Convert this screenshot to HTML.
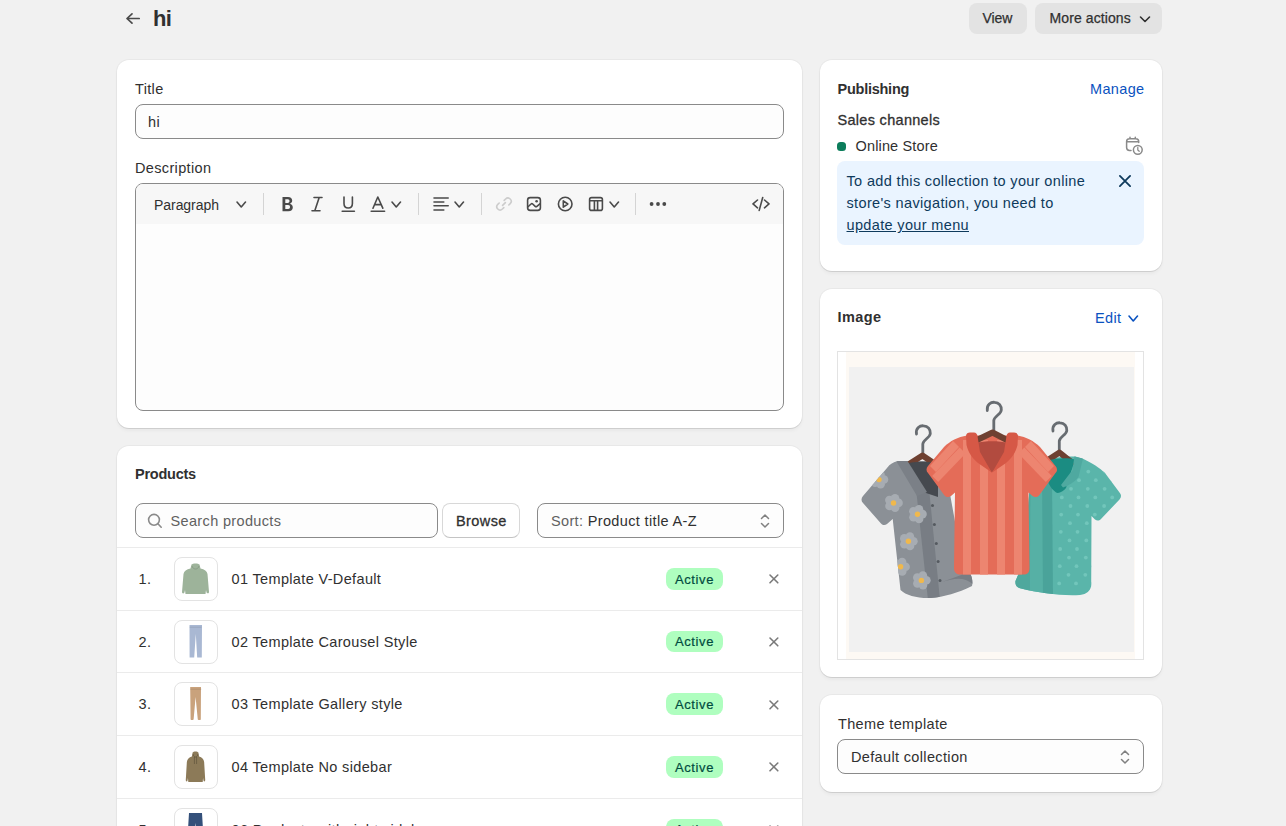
<!DOCTYPE html>
<html><head><meta charset="utf-8"><style>
html,body{margin:0;padding:0;}
body{width:1286px;height:826px;overflow:hidden;position:relative;background:#f1f1f1;font-family:'Liberation Sans', sans-serif;}
.t{position:absolute;white-space:nowrap;line-height:20px;}
.b{position:absolute;}
</style></head><body>
<svg class="b" style="left:124px;top:11px" width="18" height="15" viewBox="0 0 18 15"><path d="M8 2.8 L3 7.5 L8 12.2 M3 7.5 H15.2" fill="none" stroke="#4a4a4a" stroke-width="1.7" stroke-linecap="round" stroke-linejoin="round"/></svg>
<div class="t" style="left:153px;top:9.38px;font-size:22px;font-weight:700;color:#303030;letter-spacing:-0.7px;">hi</div>
<div class="b" style="left:969px;top:3px;width:58px;height:31px;background:#e3e3e3;border-radius:8px;"></div>
<div class="t" style="left:982.5px;top:7.65px;font-size:14px;font-weight:400;color:#303030;letter-spacing:-0.1px;-webkit-text-stroke:0.25px #303030;">View</div>
<div class="b" style="left:1035px;top:3px;width:127px;height:31px;background:#e3e3e3;border-radius:8px;"></div>
<div class="t" style="left:1049.5px;top:7.65px;font-size:14px;font-weight:400;color:#303030;letter-spacing:0.1px;-webkit-text-stroke:0.25px #303030;">More actions</div>
<svg class="b" style="left:1139px;top:15px" width="12" height="9" viewBox="0 0 12 9"><path d="M1.5 2 L6 6.5 L10.5 2" fill="none" stroke="#303030" stroke-width="1.6" stroke-linecap="round" stroke-linejoin="round"/></svg>
<div class="b" style="left:117px;top:60px;width:685px;height:368px;background:#fff;border-radius:12px;box-shadow:0 1px 0 0 rgba(26,26,26,.08), 0 0 0 1px rgba(0,0,0,.035), 0 3px 4px -1px rgba(26,26,26,.06);"></div>
<div class="t" style="left:135px;top:78.98px;font-size:14.5px;font-weight:400;color:#303030;letter-spacing:0.35px;">Title</div>
<div class="b" style="left:135px;top:104px;width:649px;height:35px;background:#fdfdfd;border:1px solid #8a8a8a;border-radius:8px;box-sizing:border-box;"></div>
<div class="t" style="left:148px;top:111.98px;font-size:14.5px;font-weight:400;color:#303030;letter-spacing:0.35px;">hi</div>
<div class="t" style="left:135px;top:157.98px;font-size:14.5px;font-weight:400;color:#303030;letter-spacing:0.35px;">Description</div>
<div class="b" style="left:135px;top:183px;width:649px;height:228px;background:#fdfdfd;border:1px solid #8a8a8a;border-radius:8px;box-sizing:border-box;"></div>
<div class="b" style="left:136px;top:184px;width:647px;height:40px;background:#f7f7f7;border-radius:7px 7px 0 0;"></div>
<div class="t" style="left:154px;top:194.65px;font-size:14px;font-weight:400;color:#303030;letter-spacing:-0.05px;">Paragraph</div>
<svg class="b" style="left:234.5px;top:200px" width="12.5" height="9" viewBox="0 0 12.5 9"><path d="M2 2 L6.25 7 L10.5 2" fill="none" stroke="#4a4a4a" stroke-width="1.6" stroke-linecap="round" stroke-linejoin="round"/></svg>
<div class="b" style="left:263px;top:193px;width:1px;height:22px;background:#d4d4d4;"></div>
<svg class="b" style="left:279px;top:194px" width="16" height="20" viewBox="0 0 16 20"><path d="M3.5 3 H9 C11.8 3 13.2 4.6 13.2 6.6 C13.2 8.3 12.2 9.4 10.8 9.8 C12.6 10.2 13.8 11.5 13.8 13.4 C13.8 15.6 12.2 17.2 9.4 17.2 H3.5 Z M6.3 5.3 V8.9 H8.8 C10 8.9 10.5 8.2 10.5 7.1 C10.5 6 10 5.3 8.8 5.3 Z M6.3 11.1 V14.9 H9.1 C10.4 14.9 11 14.2 11 13 C11 11.8 10.4 11.1 9.1 11.1 Z" fill="#4a4a4a" fill-rule="evenodd"/></svg>
<svg class="b" style="left:309px;top:194px" width="16" height="20" viewBox="0 0 16 20"><path d="M5 3.5 H13 M3 16.8 H11 M10.2 3.5 L5.8 16.8" fill="none" stroke="#4a4a4a" stroke-width="1.6" stroke-linecap="round" stroke-linejoin="round"/></svg>
<svg class="b" style="left:339px;top:194px" width="18" height="20" viewBox="0 0 18 20"><path d="M5 3 V9.5 C5 12.6 6.6 14 9.2 14 C11.8 14 13.4 12.6 13.4 9.5 V3" fill="none" stroke="#4a4a4a" stroke-width="1.6" stroke-linecap="round" stroke-linejoin="round"/><path d="M3.2 17.2 H15.4" fill="none" stroke="#4a4a4a" stroke-width="1.6" stroke-linecap="round" stroke-linejoin="round"/></svg>
<svg class="b" style="left:368px;top:194px" width="20" height="20" viewBox="0 0 20 20"><path d="M5 14.2 L9.8 3 L14.8 14.2 M6.6 10.6 H13.2" fill="none" stroke="#4a4a4a" stroke-width="1.6" stroke-linecap="round" stroke-linejoin="round"/><path d="M3.2 17.2 H16.6" fill="none" stroke="#4a4a4a" stroke-width="1.6" stroke-linecap="round" stroke-linejoin="round"/></svg>
<svg class="b" style="left:390px;top:200px" width="12.5" height="9" viewBox="0 0 12.5 9"><path d="M2 2 L6.25 7 L10.5 2" fill="none" stroke="#4a4a4a" stroke-width="1.6" stroke-linecap="round" stroke-linejoin="round"/></svg>
<div class="b" style="left:418px;top:193px;width:1px;height:22px;background:#d4d4d4;"></div>
<svg class="b" style="left:431px;top:194px" width="20" height="20" viewBox="0 0 20 20"><path d="M3 4 H17.2 M3 8 H12.8 M3 11.8 H17.2 M3 16 H12.8" fill="none" stroke="#4a4a4a" stroke-width="1.6" stroke-linecap="round" stroke-linejoin="round"/></svg>
<svg class="b" style="left:452.5px;top:200px" width="12.5" height="9" viewBox="0 0 12.5 9"><path d="M2 2 L6.25 7 L10.5 2" fill="none" stroke="#4a4a4a" stroke-width="1.6" stroke-linecap="round" stroke-linejoin="round"/></svg>
<div class="b" style="left:481px;top:193px;width:1px;height:22px;background:#d4d4d4;"></div>
<svg class="b" style="left:494px;top:194px" width="20" height="20" viewBox="0 0 20 20"><path d="M8.6 11.4 L11.4 8.6 M10.2 6.4 L11.6 5 C12.9 3.7 14.9 3.7 16.2 5 C17.5 6.3 17.5 8.3 16.2 9.6 L14.8 11 M9.8 13.6 L8.4 15 C7.1 16.3 5.1 16.3 3.8 15 C2.5 13.7 2.5 11.7 3.8 10.4 L5.2 9" fill="none" stroke="#cccccc" stroke-width="1.6" stroke-linecap="round"/></svg>
<svg class="b" style="left:525px;top:195px" width="18" height="18" viewBox="0 0 18 18"><rect x="2.6" y="2.6" width="12.8" height="12.8" rx="2.6" fill="none" stroke="#4a4a4a" stroke-width="1.6" stroke-linecap="round" stroke-linejoin="round"/><circle cx="11.6" cy="6.2" r="1.3" fill="#4a4a4a"/><path d="M2.8 12 L6 9 C6.5 8.5 7.2 8.5 7.7 9 L10.2 11.4 C10.7 11.9 11.4 11.9 11.9 11.4 L15.2 8.6" fill="none" stroke="#4a4a4a" stroke-width="1.6" stroke-linecap="round" stroke-linejoin="round"/></svg>
<svg class="b" style="left:556px;top:195px" width="18" height="18" viewBox="0 0 18 18"><circle cx="9.2" cy="9" r="6.8" fill="none" stroke="#4a4a4a" stroke-width="1.6" stroke-linecap="round" stroke-linejoin="round"/><path d="M7.3 5.8 L11.8 9 L7.3 12.2 Z" fill="none" stroke="#4a4a4a" stroke-width="1.6" stroke-linecap="round" stroke-linejoin="round"/></svg>
<svg class="b" style="left:587px;top:195px" width="18" height="18" viewBox="0 0 18 18"><rect x="2.6" y="2.6" width="12.8" height="12.8" rx="2" fill="none" stroke="#4a4a4a" stroke-width="1.6" stroke-linecap="round" stroke-linejoin="round"/><path d="M2.8 5.8 H15.2 M7.4 5.8 V15.2 M10.6 5.8 V15.2" fill="none" stroke="#4a4a4a" stroke-width="1.6" stroke-linecap="round" stroke-linejoin="round"/></svg>
<svg class="b" style="left:608px;top:200px" width="12.5" height="9" viewBox="0 0 12.5 9"><path d="M2 2 L6.25 7 L10.5 2" fill="none" stroke="#4a4a4a" stroke-width="1.6" stroke-linecap="round" stroke-linejoin="round"/></svg>
<div class="b" style="left:635px;top:193px;width:1px;height:22px;background:#d4d4d4;"></div>
<svg class="b" style="left:648px;top:200px" width="20" height="8" viewBox="0 0 20 8"><circle cx="3.6" cy="4" r="1.9" fill="#4a4a4a"/><circle cx="10" cy="4" r="1.9" fill="#4a4a4a"/><circle cx="16.3" cy="4" r="1.9" fill="#4a4a4a"/></svg>
<svg class="b" style="left:750px;top:195px" width="22" height="18" viewBox="0 0 22 18"><path d="M7.5 5 L3 8.9 L7.5 12.8 M14.5 5 L19 8.9 L14.5 12.8 M12.7 2.5 L9.2 15.4" fill="none" stroke="#4a4a4a" stroke-width="1.6" stroke-linecap="round" stroke-linejoin="round"/></svg>
<div class="b" style="left:117px;top:446px;width:685px;height:454px;background:#fff;border-radius:12px;box-shadow:0 1px 0 0 rgba(26,26,26,.08), 0 0 0 1px rgba(0,0,0,.035), 0 3px 4px -1px rgba(26,26,26,.06);"></div>
<div class="t" style="left:135px;top:464.48px;font-size:14.5px;font-weight:700;color:#303030;letter-spacing:-0.25px;">Products</div>
<div class="b" style="left:135px;top:503px;width:303px;height:35px;background:#fdfdfd;border:1px solid #8a8a8a;border-radius:8px;box-sizing:border-box;"></div>
<svg class="b" style="left:146px;top:512px" width="18" height="18" viewBox="0 0 18 18"><circle cx="8" cy="7.8" r="5.4" fill="none" stroke="#8a8a8a" stroke-width="1.6"/><path d="M11.9 11.8 L15.2 15.2" fill="none" stroke="#8a8a8a" stroke-width="1.6" stroke-linecap="round"/></svg>
<div class="t" style="left:170.5px;top:510.98px;font-size:14.5px;font-weight:400;color:#616161;letter-spacing:0.35px;">Search products</div>
<div class="b" style="left:442px;top:503px;width:78px;height:35px;background:#fff;border:1px solid #d8d8d8;border-bottom-color:#c4c4c4;border-radius:8px;box-sizing:border-box;"></div>
<div class="t" style="left:456px;top:510.98px;font-size:14.5px;font-weight:400;color:#303030;letter-spacing:0.4px;-webkit-text-stroke:0.3px #303030;">Browse</div>
<div class="b" style="left:537px;top:503px;width:247px;height:35px;background:#fdfdfd;border:1px solid #8a8a8a;border-radius:8px;box-sizing:border-box;"></div>
<div class="t" style="left:551px;top:510.98px;font-size:14.5px;font-weight:400;color:#303030;letter-spacing:0.35px;"><span style="color:#616161">Sort:</span> Product title A-Z</div>
<svg class="b" style="left:758px;top:511.5px" width="14" height="18" viewBox="0 0 14 18"><path d="M3.5 6.5 L7 3 L10.5 6.5 M3.5 11.5 L7 15 L10.5 11.5" fill="none" stroke="#808080" stroke-width="1.5" stroke-linecap="round" stroke-linejoin="round"/></svg>
<div class="b" style="left:117px;top:547px;width:685px;height:1px;background:#ebebeb;"></div>
<div class="t" style="left:138.5px;top:568.98px;font-size:14.5px;font-weight:400;color:#303030;letter-spacing:0.35px;">1.</div>
<div class="b" style="left:174px;top:557px;width:44px;height:44px;background:#fff;border:1px solid #e3e3e3;border-radius:8px;box-sizing:border-box;"></div>
<svg class="b" style="left:174px;top:557px" width="43" height="43" viewBox="0 0 43 43"><path d="M17.5 7.5 C18.5 6 24.5 6 25.5 7.5 L26.5 11.5 C30.5 12.5 33 14 33.5 17 L35 35 C35 36.8 33 36.8 32.5 35.2 L32 33 L31.5 37 L11.5 37 L11 33 L10.5 35.2 C10 36.8 8 36.8 8 35 L9.5 17 C10 14 12.5 12.5 16.5 11.5 Z" fill="#9db39a"/><path d="M18 9 C19 13 24 13 25 9" fill="none" stroke="rgba(0,0,0,.12)" stroke-width="1"/></svg>
<div class="t" style="left:231.5px;top:568.98px;font-size:14.5px;font-weight:400;color:#303030;letter-spacing:0.35px;">01 Template V-Default</div>
<div class="b" style="left:666px;top:568px;width:57px;height:22px;background:#affebf;border-radius:8px;"></div>
<div class="t" style="left:675px;top:569.50px;font-size:13px;font-weight:400;color:#014b40;letter-spacing:0.6px;-webkit-text-stroke:0.2px #014b40;">Active</div>
<svg class="b" style="left:766px;top:571px" width="16" height="16" viewBox="0 0 16 16"><path d="M4 4 L11.8 11.8 M11.8 4 L4 11.8" fill="none" stroke="#7a7a7a" stroke-width="1.6" stroke-linecap="round"/></svg>
<div class="b" style="left:117px;top:610px;width:685px;height:1px;background:#ebebeb;"></div>
<div class="t" style="left:138.5px;top:631.98px;font-size:14.5px;font-weight:400;color:#303030;letter-spacing:0.35px;">2.</div>
<div class="b" style="left:174px;top:620px;width:44px;height:44px;background:#fff;border:1px solid #e3e3e3;border-radius:8px;box-sizing:border-box;"></div>
<svg class="b" style="left:174px;top:620px" width="43" height="43" viewBox="0 0 43 43"><path d="M15.5 5 H28 L27.8 37.5 H23.2 L21.8 14 L20.2 37.5 H15.6 Z" fill="#a9b8d3"/><path d="M15.5 7.2 H27.5" stroke="rgba(0,0,0,.1)" stroke-width="1"/></svg>
<div class="t" style="left:231.5px;top:631.98px;font-size:14.5px;font-weight:400;color:#303030;letter-spacing:0.35px;">02 Template Carousel Style</div>
<div class="b" style="left:666px;top:631px;width:57px;height:21px;background:#affebf;border-radius:8px;"></div>
<div class="t" style="left:675px;top:631.50px;font-size:13px;font-weight:400;color:#014b40;letter-spacing:0.6px;-webkit-text-stroke:0.2px #014b40;">Active</div>
<svg class="b" style="left:766px;top:634px" width="16" height="16" viewBox="0 0 16 16"><path d="M4 4 L11.8 11.8 M11.8 4 L4 11.8" fill="none" stroke="#7a7a7a" stroke-width="1.6" stroke-linecap="round"/></svg>
<div class="b" style="left:117px;top:672px;width:685px;height:1px;background:#ebebeb;"></div>
<div class="t" style="left:138.5px;top:693.98px;font-size:14.5px;font-weight:400;color:#303030;letter-spacing:0.35px;">3.</div>
<div class="b" style="left:174px;top:682px;width:44px;height:44px;background:#fff;border:1px solid #e3e3e3;border-radius:8px;box-sizing:border-box;"></div>
<svg class="b" style="left:174px;top:682px" width="43" height="43" viewBox="0 0 43 43"><path d="M16.2 5 H27 L26.8 37.5 C26.3 38.2 24.6 38.2 23.8 37.5 L21.6 15 L19.6 37.5 C18.8 38.2 17.2 38.2 16.6 37.5 Z" fill="#c9a27c"/><path d="M16.2 7.2 H27.5" stroke="rgba(0,0,0,.1)" stroke-width="1"/></svg>
<div class="t" style="left:231.5px;top:693.98px;font-size:14.5px;font-weight:400;color:#303030;letter-spacing:0.35px;">03 Template Gallery style</div>
<div class="b" style="left:666px;top:693px;width:57px;height:22px;background:#affebf;border-radius:8px;"></div>
<div class="t" style="left:675px;top:694.50px;font-size:13px;font-weight:400;color:#014b40;letter-spacing:0.6px;-webkit-text-stroke:0.2px #014b40;">Active</div>
<svg class="b" style="left:766px;top:697px" width="16" height="16" viewBox="0 0 16 16"><path d="M4 4 L11.8 11.8 M11.8 4 L4 11.8" fill="none" stroke="#7a7a7a" stroke-width="1.6" stroke-linecap="round"/></svg>
<div class="b" style="left:117px;top:735px;width:685px;height:1px;background:#ebebeb;"></div>
<div class="t" style="left:138.5px;top:756.98px;font-size:14.5px;font-weight:400;color:#303030;letter-spacing:0.35px;">4.</div>
<div class="b" style="left:174px;top:745px;width:44px;height:44px;background:#fff;border:1px solid #e3e3e3;border-radius:8px;box-sizing:border-box;"></div>
<svg class="b" style="left:174px;top:745px" width="43" height="43" viewBox="0 0 43 43"><g transform="translate(21.5 0) scale(0.72 1) translate(-21.5 0)"><path d="M17.5 7.5 C18.5 6 24.5 6 25.5 7.5 L26.5 11.5 C30.5 12.5 33 14 33.5 17 L35 35 C35 36.8 33 36.8 32.5 35.2 L32 33 L31.5 37 L11.5 37 L11 33 L10.5 35.2 C10 36.8 8 36.8 8 35 L9.5 17 C10 14 12.5 12.5 16.5 11.5 Z" fill="#8c7a58"/><path d="M18 9 C19 13 24 13 25 9 M20 12 V19 M23 12 V19" fill="none" stroke="rgba(0,0,0,.25)" stroke-width="1"/></g></svg>
<div class="t" style="left:231.5px;top:756.98px;font-size:14.5px;font-weight:400;color:#303030;letter-spacing:0.35px;">04 Template No sidebar</div>
<div class="b" style="left:666px;top:756px;width:57px;height:22px;background:#affebf;border-radius:8px;"></div>
<div class="t" style="left:675px;top:757.50px;font-size:13px;font-weight:400;color:#014b40;letter-spacing:0.6px;-webkit-text-stroke:0.2px #014b40;">Active</div>
<svg class="b" style="left:766px;top:759px" width="16" height="16" viewBox="0 0 16 16"><path d="M4 4 L11.8 11.8 M11.8 4 L4 11.8" fill="none" stroke="#7a7a7a" stroke-width="1.6" stroke-linecap="round"/></svg>
<div class="b" style="left:117px;top:798px;width:685px;height:1px;background:#ebebeb;"></div>
<div class="t" style="left:138.5px;top:819.98px;font-size:14.5px;font-weight:400;color:#303030;letter-spacing:0.35px;">5.</div>
<div class="b" style="left:174px;top:808px;width:44px;height:44px;background:#fff;border:1px solid #e3e3e3;border-radius:8px;box-sizing:border-box;"></div>
<svg class="b" style="left:174px;top:808px" width="43" height="43" viewBox="0 0 43 43"><path d="M15 5 H28 L30 38 H24 L21.5 15 L19 38 H13 Z" fill="#34507a"/></svg>
<div class="t" style="left:231.5px;top:819.98px;font-size:14.5px;font-weight:400;color:#303030;letter-spacing:0.35px;">06 Products with right sidebar</div>
<div class="b" style="left:666px;top:819px;width:57px;height:21px;background:#affebf;border-radius:8px;"></div>
<div class="t" style="left:675px;top:819.50px;font-size:13px;font-weight:400;color:#014b40;letter-spacing:0.6px;-webkit-text-stroke:0.2px #014b40;">Active</div>
<svg class="b" style="left:766px;top:822px" width="16" height="16" viewBox="0 0 16 16"><path d="M4 4 L11.8 11.8 M11.8 4 L4 11.8" fill="none" stroke="#7a7a7a" stroke-width="1.6" stroke-linecap="round"/></svg>
<div class="b" style="left:820px;top:60px;width:342px;height:211px;background:#fff;border-radius:12px;box-shadow:0 1px 0 0 rgba(26,26,26,.08), 0 0 0 1px rgba(0,0,0,.035), 0 3px 4px -1px rgba(26,26,26,.06);"></div>
<div class="t" style="left:837.5px;top:78.98px;font-size:14.5px;font-weight:700;color:#303030;letter-spacing:-0.25px;">Publishing</div>
<div class="t" style="left:1090px;top:78.98px;font-size:14.5px;font-weight:400;color:#0a52c0;letter-spacing:0.35px;">Manage</div>
<div class="t" style="left:837.5px;top:109.98px;font-size:14.5px;font-weight:400;color:#303030;letter-spacing:0.3px;-webkit-text-stroke:0.3px #303030;">Sales channels</div>
<div class="b" style="left:837px;top:142px;width:9px;height:9px;background:#0c7d5b;border-radius:3.5px;"></div>
<div class="t" style="left:855.5px;top:136.48px;font-size:14.5px;font-weight:400;color:#303030;letter-spacing:0.15px;">Online Store</div>
<svg class="b" style="left:1122px;top:134px" width="24" height="22" viewBox="0 0 24 22"><path d="M9 16.5 H7.5 C5.6 16.5 4.6 15.5 4.6 13.6 V7.6 C4.6 5.7 5.6 4.7 7.5 4.7 H13.8 C15.7 4.7 16.7 5.7 16.7 7.6 V8.5 M4.8 7.8 H16.6 M8 3.2 V4.8 M13.3 3.2 V4.8" fill="none" stroke="#8a8a8a" stroke-width="1.5" stroke-linecap="round"/><circle cx="15.8" cy="15.8" r="4.4" fill="#fff" stroke="#8a8a8a" stroke-width="1.5"/><path d="M15.8 13.5 V15.9 L17.2 17.2" fill="none" stroke="#8a8a8a" stroke-width="1.3" stroke-linecap="round"/></svg>
<div class="b" style="left:837px;top:161px;width:307px;height:84px;background:#eaf4ff;border-radius:8px;"></div>
<div class="t" style="left:846.5px;top:171.48px;font-size:14.5px;font-weight:400;color:#0e3a5c;letter-spacing:0.35px;">To add this collection to your online</div>
<div class="t" style="left:846.5px;top:193.48px;font-size:14.5px;font-weight:400;color:#0e3a5c;letter-spacing:0.35px;">store's navigation, you need to</div>
<div class="t" style="left:846.5px;top:215.48px;font-size:14.5px;font-weight:400;color:#0e3a5c;letter-spacing:0.35px;"><span style="text-decoration:underline;text-underline-offset:1px">update your menu</span></div>
<svg class="b" style="left:1116px;top:172px" width="18" height="18" viewBox="0 0 18 18"><path d="M3.9 3.9 L14.1 14.1 M14.1 3.9 L3.9 14.1" fill="none" stroke="#0e3a5c" stroke-width="1.8" stroke-linecap="round"/></svg>
<div class="b" style="left:820px;top:289px;width:342px;height:388px;background:#fff;border-radius:12px;box-shadow:0 1px 0 0 rgba(26,26,26,.08), 0 0 0 1px rgba(0,0,0,.035), 0 3px 4px -1px rgba(26,26,26,.06);"></div>
<div class="t" style="left:837.5px;top:307.48px;font-size:14.5px;font-weight:700;color:#303030;letter-spacing:0.4px;">Image</div>
<div class="t" style="left:1095px;top:307.98px;font-size:14.5px;font-weight:400;color:#0a52c0;letter-spacing:0.35px;">Edit</div>
<svg class="b" style="left:1127px;top:314px" width="12.5" height="9" viewBox="0 0 12.5 9"><path d="M2 2 L6.25 7 L10.5 2" fill="none" stroke="#0a52c0" stroke-width="1.6" stroke-linecap="round" stroke-linejoin="round"/></svg>
<div class="b" style="left:837px;top:351px;width:307px;height:309px;border:1px solid #e3e3e3;box-sizing:border-box;background:#fff;"></div>
<div class="b" style="left:846px;top:352px;width:289px;height:307px;background:#fdf9f4;"></div>
<div class="b" style="left:849px;top:367px;width:285px;height:285px;background:#f1f1f1;"></div>
<svg class="b" style="left:837px;top:351px" width="307" height="309" viewBox="837 351 307 309"><defs><clipPath id="cg"><path d="M898 461 C893 462 890 464 887 468 L863 496 C861 498.5 861 501 863 503 L881 523.5 C883 525.5 885 525.5 887 524 L892.7 519 L900.5 590 C906 595.5 918 598.5 930.5 598 C944 597 958 593 972 586 C973 582 972 577 970.5 574.5 L962 560 L946 472 C944 466 940 462 936 461 Z"/></clipPath><clipPath id="ct"><path d="M1044 462 C1050 458 1062 456 1075 456.5 L1082.5 458.5 C1092 463 1100 468 1105 473 L1119.5 492.5 C1121.5 495 1121.5 497 1119.5 499.5 L1101 519 C1099 521 1097 521 1095 519.5 L1091.5 516 L1091.2 586 C1090 591 1087 594 1080 595 C1060 596 1040 593 1021 588.5 C1017 588 1015 585 1015.5 581 L1022 566 L1029.6 490 Z"/></clipPath><clipPath id="cr"><path d="M967 435.5 C958 437 950 441 944 447 L928 466 C926 468.5 926 471 928 473 L944.5 495.5 C946.5 497.5 949 497.5 951 496 L955 492.5 L954 568 C954 572 956 574.5 960 574.5 L1024 574.5 C1028 574.5 1029.5 572 1029.5 568 L1028.5 492.5 L1032.5 496 C1034.5 497.5 1037 497.5 1039 495.5 L1055.5 473 C1057.5 471 1057.5 468.5 1055.5 466 L1040 447 C1034 441 1026 437 1017.6 435.5 Z"/></clipPath></defs><path d="M916.5 434 C915.5 428 920 425.5 923.5 425.8 C928 426 930.5 429.5 930.3 433.5 C930 438 923.2 439.5 922.8 444 V453" fill="none" stroke="#676c71" stroke-width="2.8" stroke-linecap="round"/><path d="M987.3 410.5 C986.5 404.5 991 402 994.6 402.3 C999 402.5 1001.5 406 1001.3 410 C1001 414.5 994.3 416 993.8 420.5 V431" fill="none" stroke="#676c71" stroke-width="2.8" stroke-linecap="round"/><path d="M1053 431 C1052 425 1056.5 422.5 1060 422.8 C1064.5 423 1067 426.5 1066.8 430.5 C1066.5 435 1059.8 436.5 1059.3 441 V451" fill="none" stroke="#676c71" stroke-width="2.8" stroke-linecap="round"/><path d="M898 461 C893 462 890 464 887 468 L863 496 C861 498.5 861 501 863 503 L881 523.5 C883 525.5 885 525.5 887 524 L892.7 519 L900.5 590 C906 595.5 918 598.5 930.5 598 C944 597 958 593 972 586 C973 582 972 577 970.5 574.5 L962 560 L946 472 C944 466 940 462 936 461 Z" fill="#8b9096"/><g clip-path="url(#cg)"><path d="M914 470 L927 468 L940 600 L928 600 Z" fill="#787d84"/><path d="M942 582 C955 578 965 576 975 586 L975 570 Z" fill="#787d84"/></g><path d="M906 466 L922.5 455.5 L938 466" fill="none" stroke="#6e4031" stroke-width="6" stroke-linecap="round" stroke-linejoin="round"/><g clip-path="url(#cg)"><path d="M905 464 C915 461 930 461 938 464 L938 497 L926 493 Z" fill="#45494f"/><path d="M895 459 L905 457 L927 492 L917 496 Z" fill="#7b8087"/><circle cx="895.0" cy="498.2" r="4.3" fill="#a7acb2"/><circle cx="898.5" cy="502.9" r="4.3" fill="#a7acb2"/><circle cx="895.1" cy="507.7" r="4.3" fill="#a7acb2"/><circle cx="889.5" cy="506.0" r="4.3" fill="#a7acb2"/><circle cx="889.4" cy="500.1" r="4.3" fill="#a7acb2"/><circle cx="893.5" cy="503" r="4" fill="#a7acb2"/><circle cx="893.5" cy="503" r="2.7" fill="#f0b84c"/><circle cx="919.0" cy="509.4" r="4.3" fill="#a7acb2"/><circle cx="922.5" cy="514.1" r="4.3" fill="#a7acb2"/><circle cx="919.1" cy="518.9" r="4.3" fill="#a7acb2"/><circle cx="913.5" cy="517.2" r="4.3" fill="#a7acb2"/><circle cx="913.4" cy="511.3" r="4.3" fill="#a7acb2"/><circle cx="917.5" cy="514.2" r="4" fill="#a7acb2"/><circle cx="917.5" cy="514.2" r="2.7" fill="#f0b84c"/><circle cx="909.9" cy="536.5" r="4.3" fill="#a7acb2"/><circle cx="913.4" cy="541.2" r="4.3" fill="#a7acb2"/><circle cx="910.0" cy="546.0" r="4.3" fill="#a7acb2"/><circle cx="904.4" cy="544.3" r="4.3" fill="#a7acb2"/><circle cx="904.3" cy="538.4" r="4.3" fill="#a7acb2"/><circle cx="908.4" cy="541.3" r="4" fill="#a7acb2"/><circle cx="908.4" cy="541.3" r="2.7" fill="#f0b84c"/><circle cx="902.1" cy="562.0" r="4.3" fill="#a7acb2"/><circle cx="905.6" cy="566.7" r="4.3" fill="#a7acb2"/><circle cx="902.2" cy="571.5" r="4.3" fill="#a7acb2"/><circle cx="896.6" cy="569.8" r="4.3" fill="#a7acb2"/><circle cx="896.5" cy="563.9" r="4.3" fill="#a7acb2"/><circle cx="900.6" cy="566.8" r="4" fill="#a7acb2"/><circle cx="900.6" cy="566.8" r="2.7" fill="#f0b84c"/><circle cx="922.9" cy="575.6" r="4.3" fill="#a7acb2"/><circle cx="926.4" cy="580.3" r="4.3" fill="#a7acb2"/><circle cx="923.0" cy="585.1" r="4.3" fill="#a7acb2"/><circle cx="917.4" cy="583.4" r="4.3" fill="#a7acb2"/><circle cx="917.3" cy="577.5" r="4.3" fill="#a7acb2"/><circle cx="921.4" cy="580.4" r="4" fill="#a7acb2"/><circle cx="921.4" cy="580.4" r="2.7" fill="#f0b84c"/><circle cx="880.5" cy="474.8" r="4.3" fill="#a7acb2"/><circle cx="884.0" cy="479.5" r="4.3" fill="#a7acb2"/><circle cx="880.6" cy="484.3" r="4.3" fill="#a7acb2"/><circle cx="875.0" cy="482.6" r="4.3" fill="#a7acb2"/><circle cx="874.9" cy="476.7" r="4.3" fill="#a7acb2"/><circle cx="879" cy="479.6" r="4" fill="#a7acb2"/><circle cx="879" cy="479.6" r="2.7" fill="#f0b84c"/><circle cx="932.5" cy="505.6" r="1.5" fill="#555a60"/><circle cx="934.4" cy="524.4" r="1.5" fill="#555a60"/><circle cx="936.3" cy="543.4" r="1.5" fill="#555a60"/><circle cx="938.1" cy="561.6" r="1.5" fill="#555a60"/><circle cx="940.0" cy="580.4" r="1.5" fill="#555a60"/></g><path d="M1044 462 C1050 458 1062 456 1075 456.5 L1082.5 458.5 C1092 463 1100 468 1105 473 L1119.5 492.5 C1121.5 495 1121.5 497 1119.5 499.5 L1101 519 C1099 521 1097 521 1095 519.5 L1091.5 516 L1091.2 586 C1090 591 1087 594 1080 595 C1060 596 1040 593 1021 588.5 C1017 588 1015 585 1015.5 581 L1022 566 L1029.6 490 Z" fill="#5ab5aa"/><g clip-path="url(#ct)"><path d="M1010 470 L1031 470 L1030 600 L1010 600 Z" fill="#4fa89d"/><path d="M1031 470 L1043 470 L1043 600 L1030 600 Z" fill="#56b0a5"/><path d="M1042 475 L1052 473 L1053 600 L1043 600 Z" fill="#4aa39a"/><circle cx="1071.5" cy="471.6" r="1.9" fill="#72c6bb"/><circle cx="1088.3" cy="471.6" r="1.9" fill="#72c6bb"/><circle cx="1105.1" cy="471.6" r="1.9" fill="#72c6bb"/><circle cx="1121.9" cy="471.6" r="1.9" fill="#72c6bb"/><circle cx="1062.2" cy="480.2" r="1.9" fill="#72c6bb"/><circle cx="1079.0" cy="480.2" r="1.9" fill="#72c6bb"/><circle cx="1095.8" cy="480.2" r="1.9" fill="#72c6bb"/><circle cx="1112.7" cy="480.2" r="1.9" fill="#72c6bb"/><circle cx="1071.0" cy="488.8" r="1.9" fill="#72c6bb"/><circle cx="1087.8" cy="488.8" r="1.9" fill="#72c6bb"/><circle cx="1104.6" cy="488.8" r="1.9" fill="#72c6bb"/><circle cx="1121.4" cy="488.8" r="1.9" fill="#72c6bb"/><circle cx="1061.8" cy="497.4" r="1.9" fill="#72c6bb"/><circle cx="1078.5" cy="497.4" r="1.9" fill="#72c6bb"/><circle cx="1095.3" cy="497.4" r="1.9" fill="#72c6bb"/><circle cx="1112.2" cy="497.4" r="1.9" fill="#72c6bb"/><circle cx="1070.5" cy="506.0" r="1.9" fill="#72c6bb"/><circle cx="1087.3" cy="506.0" r="1.9" fill="#72c6bb"/><circle cx="1104.1" cy="506.0" r="1.9" fill="#72c6bb"/><circle cx="1120.9" cy="506.0" r="1.9" fill="#72c6bb"/><circle cx="1061.2" cy="514.6" r="1.9" fill="#72c6bb"/><circle cx="1078.0" cy="514.6" r="1.9" fill="#72c6bb"/><circle cx="1094.8" cy="514.6" r="1.9" fill="#72c6bb"/><circle cx="1111.7" cy="514.6" r="1.9" fill="#72c6bb"/><circle cx="1070.0" cy="523.2" r="1.9" fill="#72c6bb"/><circle cx="1086.8" cy="523.2" r="1.9" fill="#72c6bb"/><circle cx="1103.6" cy="523.2" r="1.9" fill="#72c6bb"/><circle cx="1120.4" cy="523.2" r="1.9" fill="#72c6bb"/><circle cx="1060.8" cy="531.8" r="1.9" fill="#72c6bb"/><circle cx="1077.5" cy="531.8" r="1.9" fill="#72c6bb"/><circle cx="1094.3" cy="531.8" r="1.9" fill="#72c6bb"/><circle cx="1111.2" cy="531.8" r="1.9" fill="#72c6bb"/><circle cx="1069.5" cy="540.4" r="1.9" fill="#72c6bb"/><circle cx="1086.3" cy="540.4" r="1.9" fill="#72c6bb"/><circle cx="1103.1" cy="540.4" r="1.9" fill="#72c6bb"/><circle cx="1119.9" cy="540.4" r="1.9" fill="#72c6bb"/><circle cx="1060.2" cy="549.0" r="1.9" fill="#72c6bb"/><circle cx="1077.0" cy="549.0" r="1.9" fill="#72c6bb"/><circle cx="1093.8" cy="549.0" r="1.9" fill="#72c6bb"/><circle cx="1110.7" cy="549.0" r="1.9" fill="#72c6bb"/><circle cx="1069.0" cy="557.6" r="1.9" fill="#72c6bb"/><circle cx="1085.8" cy="557.6" r="1.9" fill="#72c6bb"/><circle cx="1102.6" cy="557.6" r="1.9" fill="#72c6bb"/><circle cx="1119.4" cy="557.6" r="1.9" fill="#72c6bb"/><circle cx="1059.8" cy="566.2" r="1.9" fill="#72c6bb"/><circle cx="1076.5" cy="566.2" r="1.9" fill="#72c6bb"/><circle cx="1093.3" cy="566.2" r="1.9" fill="#72c6bb"/><circle cx="1110.2" cy="566.2" r="1.9" fill="#72c6bb"/><circle cx="1068.5" cy="574.8" r="1.9" fill="#72c6bb"/><circle cx="1085.3" cy="574.8" r="1.9" fill="#72c6bb"/><circle cx="1102.1" cy="574.8" r="1.9" fill="#72c6bb"/><circle cx="1118.9" cy="574.8" r="1.9" fill="#72c6bb"/><circle cx="1059.2" cy="583.4" r="1.9" fill="#72c6bb"/><circle cx="1076.0" cy="583.4" r="1.9" fill="#72c6bb"/><circle cx="1092.8" cy="583.4" r="1.9" fill="#72c6bb"/><circle cx="1109.7" cy="583.4" r="1.9" fill="#72c6bb"/></g><path d="M1044 462.5 L1059.5 452.5 L1072 462.5" fill="none" stroke="#6e4031" stroke-width="6" stroke-linecap="round" stroke-linejoin="round"/><g clip-path="url(#ct)"><path d="M1047 461 C1055 458 1068 457.5 1075 459.5 L1066 488 C1063 492 1058 494 1055.8 492.3 C1052 489 1048 485 1047.5 478 Z" fill="#1b8c82"/><path d="M1074.5 455.5 L1083 458.5 L1078.5 477 C1075 482 1068 486 1063 487.5 L1061 485 L1072.5 470 Z" fill="#4fa9a0"/></g><path d="M967 435.5 C958 437 950 441 944 447 L928 466 C926 468.5 926 471 928 473 L944.5 495.5 C946.5 497.5 949 497.5 951 496 L955 492.5 L954 568 C954 572 956 574.5 960 574.5 L1024 574.5 C1028 574.5 1029.5 572 1029.5 568 L1028.5 492.5 L1032.5 496 C1034.5 497.5 1037 497.5 1039 495.5 L1055.5 473 C1057.5 471 1057.5 468.5 1055.5 466 L1040 447 C1034 441 1026 437 1017.6 435.5 Z" fill="#e46c58"/><g clip-path="url(#cr)"><rect x="963" y="440" width="8" height="140" fill="#ed8570"/><rect x="980" y="440" width="8" height="140" fill="#ed8570"/><rect x="997" y="440" width="8" height="140" fill="#ed8570"/><rect x="1014" y="440" width="8" height="140" fill="#ed8570"/><path d="M930.0 466.0 L953.0 441.0 L959.0 447.0 L936.0 472.0 Z" fill="#ed8570"/><path d="M1054.0 466.0 L1031.0 441.0 L1025.0 447.0 L1048.0 472.0 Z" fill="#ed8570"/><path d="M932.2 475.9 L959.6 447.6 L965.6 453.6 L938.2 481.9 Z" fill="#ed8570"/><path d="M1051.8 475.9 L1024.4 447.6 L1018.4 453.6 L1045.8 481.9 Z" fill="#ed8570"/></g><path d="M977 440 L992.5 432.5 L1007 440" fill="none" stroke="#6e4031" stroke-width="6" stroke-linecap="round" stroke-linejoin="round"/><path d="M976 443 C985 440.5 999 440.5 1008 443 L1005 458 L991.8 472.5 L979 458 Z" fill="#b24b3f"/><path d="M966 436 C966 433.5 968 432.5 970 432.5 L974 432.5 C976 432.5 977 434 977.5 436 L980 452 L991.8 472.5 L978 463 C972 458 968 452 966.5 445 Z" fill="#d65846"/><path d="M1018 436 C1018 433.5 1016 432.5 1014 432.5 L1010 432.5 C1008 432.5 1007 434 1006.5 436 L1004 452 L992.2 472.5 L1006 463 C1012 458 1016 452 1017.5 445 Z" fill="#d65846"/></svg>
<div class="b" style="left:820px;top:695px;width:342px;height:97px;background:#fff;border-radius:12px;box-shadow:0 1px 0 0 rgba(26,26,26,.08), 0 0 0 1px rgba(0,0,0,.035), 0 3px 4px -1px rgba(26,26,26,.06);"></div>
<div class="t" style="left:838px;top:714.48px;font-size:14.5px;font-weight:400;color:#303030;letter-spacing:0.35px;">Theme template</div>
<div class="b" style="left:837px;top:739px;width:307px;height:35px;background:#fdfdfd;border:1px solid #8a8a8a;border-radius:8px;box-sizing:border-box;"></div>
<div class="t" style="left:851px;top:747.48px;font-size:14.5px;font-weight:400;color:#303030;letter-spacing:0.35px;">Default collection</div>
<svg class="b" style="left:1118px;top:747.5px" width="14" height="18" viewBox="0 0 14 18"><path d="M3.5 6.5 L7 3 L10.5 6.5 M3.5 11.5 L7 15 L10.5 11.5" fill="none" stroke="#808080" stroke-width="1.5" stroke-linecap="round" stroke-linejoin="round"/></svg>
</body></html>
